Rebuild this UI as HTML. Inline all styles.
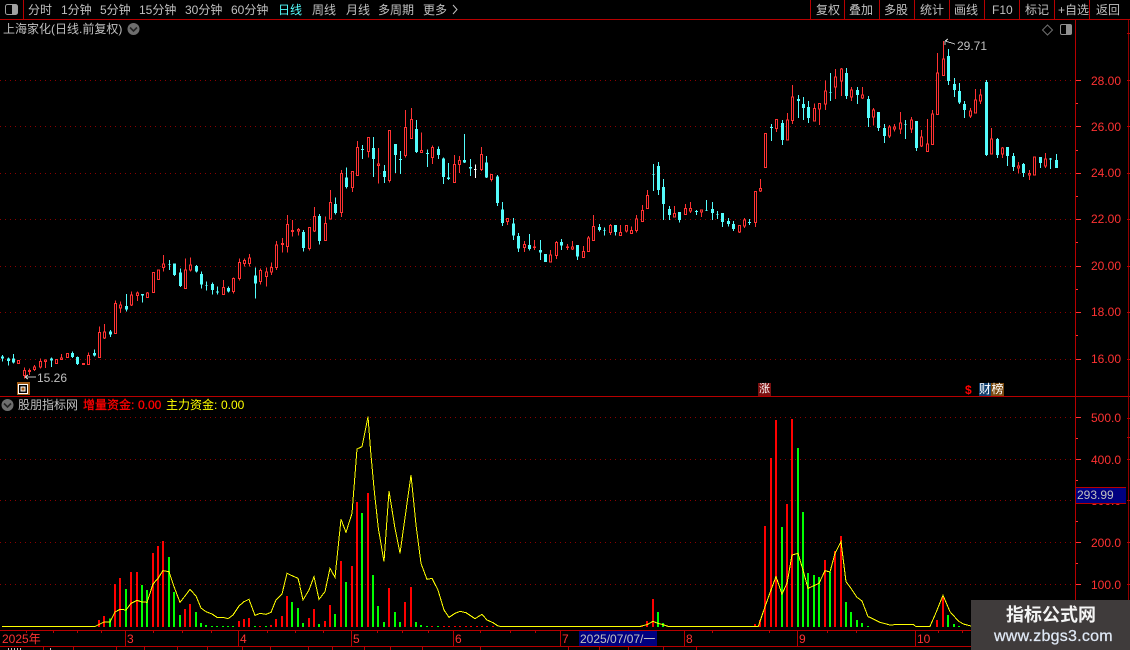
<!DOCTYPE html>
<html lang="zh">
<head>
<meta charset="utf-8">
<title>上海家化</title>
<style>
html,body{margin:0;padding:0;background:#000;width:1130px;height:650px;overflow:hidden}
#p{position:relative;width:1130px;height:650px;overflow:hidden;background:#000;font-family:"Liberation Sans","WenQuanYi Zen Hei","Noto Sans CJK SC",sans-serif;font-size:12px;line-height:14px;color:#c0c0c0}
#p svg{position:absolute;left:0;top:0}
.t{position:absolute;white-space:pre}
.a{position:absolute;white-space:pre;color:#ff3232;left:1091px}
.x{position:absolute;white-space:pre;color:#ff3232;top:632px}
.r{fill:none;stroke:#ff3232;stroke-width:3}
.rb{fill:#000;stroke:#ff3232;stroke-width:3}
.c{fill:none;stroke:#54fcfc;stroke-width:3}
.cb{fill:none;stroke:#54fcfc;stroke-width:9}
.br{fill:none;stroke:#f00;stroke-width:6}
.bg{fill:none;stroke:#0f0;stroke-width:6}
.y{fill:none;stroke:#ff0;stroke-width:3}
</style>
</head>
<body>
<div id="p">
<svg width="1130" height="650" viewBox="0 0 1130 650" shape-rendering="crispEdges">
<!-- grids -->
<path d="M0 80.5H1075M0 126.5H1075M0 173.5H1075M0 219.5H1075M0 266.5H1075M0 312.5H1075M0 359.5H1075M0 417.5H1075M0 459.5H1075M0 500.5H1075M0 542.5H1075M0 584.5H1075" fill="none" stroke="#8c0000" stroke-width="1" stroke-dasharray="1 4"/>
<!-- frame lines -->
<path d="M0 19.5H1130M0 396.5H1130M0 630.5H1075M0 646.5H1130M23.5 0V19M810.5 0V19M844.5 0V19M879.5 0V19M914.5 0V19M949.5 0V19M984.5 0V19M1019.5 0V19M1054.5 0V19M1089.5 0V19M1075.5 19V650" fill="none" stroke="#b80000" stroke-width="1"/>
<path d="M1128.5 20V650" fill="none" stroke="#900000" stroke-width="1"/>
<path d="M1127 33.5H1130M1127 80.5H1130M1127 126.5H1130M1127 173.5H1130M1127 219.5H1130M1127 266.5H1130M1127 312.5H1130M1127 359.5H1130M1127 418.5H1130M1127 437.5H1130M1127 459.5H1130M1127 500.5H1130M1127 542.5H1130M1127 584.5H1130" fill="none" stroke="#b80000" stroke-width="1"/>
<!-- axis ticks -->
<path d="M1076 80.5H1081M1076 126.5H1081M1076 173.5H1081M1076 219.5H1081M1076 266.5H1081M1076 312.5H1081M1076 359.5H1081M1076 417.5H1081M1076 459.5H1081M1076 500.5H1081M1076 542.5H1081M1076 584.5H1081M1076 103.5H1078M1076 150.5H1078M1076 196.5H1078M1076 242.5H1078M1076 289.5H1078M1076 335.5H1078M1076 438.5H1078M1076 480.5H1078M1076 521.5H1078M1076 563.5H1078M1076 605.5H1078" fill="none" stroke="#ff3232" stroke-width="1"/>
<!-- x axis ticks -->
<path d="M125.5 631V646M238.5 631V646M351.5 631V646M453.5 631V646M560.5 631V646M579.5 631V646M684.5 631V646M797.5 631V646M915.5 631V646M26.5 631V633M53.5 631V633M77.5 631V633M101.5 631V633M153.5 631V633M182.5 631V633M211.5 631V633M267.5 631V633M295.5 631V633M323.5 631V633M377.5 631V633M402.5 631V633M428.5 631V633M480.5 631V633M510.5 631V633M535.5 631V633M712.5 631V633M769.5 631V633M827.5 631V633M856.5 631V633M938.5 631V633M962.5 631V633M43.5 647V650M73.5 647V650M116.5 647V650M144.5 647V650M177.5 647V650M207.5 647V650M242.5 647V650M270.5 647V650M308.5 647V650M332.5 647V650M364.5 647V650M390.5 647V650M422.5 647V650M480.5 647V650M568.5 647V650M599.5 647V650M628.5 647V650M663.5 647V650M696.5 647V650" fill="none" stroke="#b80000" stroke-width="1"/>
<path d="M8.5 648V650M11.5 648V650M14.5 648V650M17.5 648V650M20.5 648V650M50.5 648V650" fill="none" stroke="#c0c0c0" stroke-width="1"/>

<!-- candles 1 -->
<g transform="translate(0 250) scale(.333333)">
<path class="c" d="M7.5 315V335M25.5 323V347M40.5 312V340M154.5 323V351M217.5 305V324M232.5 319V345M283.5 298V320M331.5 240V261M379.5 132V185M427.5 132V158M508.5 30V60M523.5 40V78M541.5 55V111M589.5 45V67M604.5 64V116M619.5 95V122M637.5 97V134M652.5 110V134M685.5 110V128M766.5 52V146"/>
<path class="cb" d="M7.5 320V326M25.5 325V333M40.5 326V338M154.5 326V331M217.5 309V321M232.5 321V342M283.5 309V316M331.5 245V254M379.5 168V178M427.5 132V136M508.5 43V45M523.5 40V75M541.5 68V108M589.5 48V64M604.5 72V104M619.5 106V108M637.5 102V120M652.5 125V127M685.5 114V124M766.5 76V101"/>
<path class="r" d="M73.5 352V385M88.5 355V375M103.5 345V363M121.5 325V355M136.5 328V354M184.5 312V330M265.5 307V344M298.5 229V323M313.5 222V267M346.5 151V251M361.5 155V189M394.5 124V168M412.5 124V153M442.5 126V143M490.5 15V65M556.5 25V115M571.5 22V64M670.5 90V134M700.5 82V131M718.5 25V92M733.5 25V50M748.5 12V50M781.5 55V104M799.5 52V110"/>
<path class="rb" d="M52.5 331h6V341h-6zM70.5 361h6V377h-6zM85.5 362h6V364h-6zM100.5 351h6V359h-6zM118.5 334h6V351h-6zM133.5 330h6V334h-6zM166.5 328h6V341h-6zM181.5 324h6V328h-6zM199.5 310h6V323h-6zM247.5 340h6V344h-6zM262.5 316h6V344h-6zM295.5 247h6V323h-6zM310.5 246h6V264h-6zM343.5 160h6V251h-6zM358.5 165h6V174h-6zM391.5 135h6V165h-6zM409.5 129h6V137h-6zM439.5 129h6V143h-6zM457.5 67h6V128h-6zM472.5 60h6V88h-6zM487.5 42h6V52h-6zM553.5 60h6V115h-6zM568.5 45h6V60h-6zM667.5 112h6V134h-6zM697.5 85h6V124h-6zM715.5 37h6V86h-6zM730.5 31h6V40h-6zM745.5 24h6V40h-6zM778.5 61h6V94h-6zM796.5 66h6V80h-6z"/>
</g>
<!-- candles 2 -->
<g transform="translate(270 100) scale(.333333)">
<path class="c" d="M100.5 390V455M148.5 342V434M196.5 292V344M229.5 202V266M277.5 135V177M310.5 111V231M343.5 195V249M376.5 132V219M391.5 153V222M439.5 60V159M472.5 148V201M505.5 139V177M520.5 172V252M535.5 189V240M583.5 102V189M601.5 177V228M649.5 168V234M682.5 225V318M697.5 306V378M730.5 354V420M745.5 399V456M778.5 402V452"/>
<path class="cb" d="M100.5 396V444M148.5 348V423M196.5 312V339M229.5 232V261M277.5 147V150M310.5 144V177M343.5 213V231M376.5 132V165M391.5 177V180M439.5 87V156M472.5 159V162M505.5 147V165M520.5 175V231M535.5 232V237M583.5 180V187M601.5 201V206M649.5 187V232M682.5 229V309M697.5 328V369M730.5 370V407M745.5 408V446M778.5 435V447"/>
<path d="M616.5 193V234" fill="none" stroke="#fff" stroke-width="3"/>
<path d="M612 208H619" fill="none" stroke="#fff" stroke-width="3"/>
<path class="r" d="M4.5 488V525M19.5 423V510M37.5 414V458M52.5 345V458M67.5 360V410M85.5 384V407M118.5 382V452M133.5 321V396M166.5 350V422M181.5 270V358M214.5 210V351M247.5 214V276M262.5 123V227M295.5 112V173M325.5 144V251M358.5 91V248M406.5 30V173M424.5 24V116M454.5 98V158M487.5 136V192M553.5 165V248M568.5 168V219M634.5 141V213M664.5 223V245M712.5 355V375M763.5 423V456M793.5 420V450"/>
<path class="rb" d="M1.5 502h6V516h-6zM16.5 435h6V503h-6zM34.5 431h6V434h-6zM49.5 373h6V440h-6zM64.5 391h6V395h-6zM82.5 388h6V393h-6zM115.5 382h6V446h-6zM130.5 349h6V393h-6zM163.5 370h6V422h-6zM178.5 307h6V357h-6zM211.5 220h6V338h-6zM244.5 214h6V263h-6zM259.5 142h6V227h-6zM292.5 112h6V155h-6zM322.5 192h6V197h-6zM355.5 91h6V242h-6zM403.5 82h6V167h-6zM421.5 58h6V116h-6zM451.5 151h6V158h-6zM484.5 142h6V172h-6zM550.5 193h6V248h-6zM565.5 181h6V193h-6zM631.5 163h6V208h-6zM661.5 223h6V239h-6zM709.5 355h6V365h-6zM760.5 433h6V443h-6zM790.5 441h6V443h-6z"/>
</g>
<!-- candles 3 -->
<g transform="translate(540 60) scale(.333333)">
<path class="c" d="M1.5 540V600M16.5 582V606M64.5 537V570M112.5 555V600M178.5 492V515M193.5 502V527M226.5 495V527M340.5 312V393M355.5 306V405M370.5 357V480M388.5 438V480M418.5 456V488M469.5 450V465M499.5 420V453M517.5 426V480M532.5 453V477M547.5 459V501M565.5 474V500M580.5 483V513M628.5 477V495M694.5 192V243M727.5 180V255M775.5 105V174"/>
<path class="cb" d="M1.5 570V578M16.5 582V606M64.5 546V557M112.5 555V590M178.5 501V510M193.5 510V512M226.5 495V516M340.5 343V345M355.5 318V390M370.5 381V432M388.5 447V465M418.5 456V480M469.5 453V456M499.5 451V453M517.5 447V459M532.5 462V464M547.5 459V486M565.5 483V492M580.5 492V507M628.5 486V489M694.5 201V204M727.5 189V240M775.5 117V123"/>
<path class="r" d="M31.5 570V606M49.5 543V597M82.5 552V570M97.5 543V570M130.5 558V593M145.5 528V575M160.5 465V542M211.5 492V525M241.5 495V527M259.5 496V518M274.5 499V521M289.5 465V518M307.5 435V485M322.5 390V446M403.5 438V471M436.5 432V464M451.5 426V459M484.5 450V471M598.5 496V519M613.5 474V504M646.5 394V501M661.5 357V396M709.5 178V216M742.5 159V240M757.5 75V192"/>
<path class="rb" d="M28.5 585h6V606h-6zM46.5 547h6V587h-6zM79.5 561h6V563h-6zM94.5 561h6V567h-6zM127.5 574h6V593h-6zM142.5 534h6V575h-6zM157.5 499h6V542h-6zM208.5 496h6V518h-6zM238.5 517h6V527h-6zM256.5 496h6V513h-6zM271.5 511h6V521h-6zM286.5 477h6V512h-6zM304.5 451h6V485h-6zM319.5 406h6V446h-6zM400.5 460h6V471h-6zM433.5 445h6V464h-6zM448.5 445h6V453h-6zM481.5 450h6V456h-6zM595.5 496h6V516h-6zM610.5 480h6V498h-6zM643.5 394h6V488h-6zM658.5 385h6V393h-6zM673.5 220h6V323h-6zM706.5 178h6V206h-6zM739.5 180h6V240h-6zM754.5 111h6V181h-6z"/>
</g>
<!-- candles 4 -->
<g transform="translate(800 40) scale(.333333)">
<path class="c" d="M10.5 171V240M25.5 183V249M91.5 99V183M139.5 84V177M172.5 141V192M205.5 168V261M235.5 216V273M253.5 252V309M316.5 240V297M349.5 243V333M445.5 27V135M463.5 114V171M478.5 129V192M493.5 183V234M559.5 120V348M592.5 294V354M622.5 321V378M640.5 339V393M670.5 369V411M721.5 351V384M751.5 354V387M769.5 342V384"/>
<path class="cb" d="M10.5 192V204M25.5 201V234M91.5 156V158M139.5 99V168M172.5 150V165M205.5 177V234M235.5 216V264M253.5 264V288M316.5 252V254M349.5 243V324M445.5 48V123M463.5 132V150M478.5 153V187M493.5 192V210M559.5 126V345M592.5 297V345M622.5 321V348M640.5 348V381M670.5 372V399M721.5 351V369M751.5 356V358M769.5 360V384"/>
<path class="r" d="M43.5 190V243M58.5 190V255M76.5 122V210M106.5 87V177M124.5 84V168M154.5 141V183M187.5 141V177M220.5 204V256M268.5 255V294M283.5 252V275M301.5 216V282M334.5 231V279M364.5 270V321M382.5 237V335M397.5 210V314M412.5 39V224M430.5 3V107M511.5 204V234M526.5 147V219M541.5 147V192M574.5 264V342M607.5 321V354M655.5 366V400M688.5 390V420M736.5 339V384"/>
<path class="rb" d="M40.5 205h6V243h-6zM55.5 190h6V207h-6zM73.5 153h6V192h-6zM103.5 111h6V141h-6zM121.5 87h6V123h-6zM151.5 150h6V171h-6zM184.5 165h6V174h-6zM217.5 210h6V231h-6zM265.5 261h6V288h-6zM280.5 261h6V267h-6zM298.5 249h6V267h-6zM331.5 240h6V267h-6zM361.5 291h6V318h-6zM379.5 312h6V335h-6zM394.5 222h6V314h-6zM409.5 99h6V224h-6zM427.5 57h6V107h-6zM508.5 213h6V228h-6zM523.5 180h6V219h-6zM538.5 165h6V183h-6zM571.5 297h6V342h-6zM604.5 324h6V342h-6zM652.5 378h6V384h-6zM685.5 400h6V405h-6zM700.5 351h6V405h-6zM733.5 357h6V378h-6z"/>
</g>

<!-- bars and line -->
<g transform="translate(0 520) scale(.333333)">
<path class="br" d="M297 321V300M312 321V288M345 321V192M360 321V174M393 321V156M411 321V156M459 321V99M474 321V78M489 321V63M555 321V267M570 321V252M717 321V303M732 321V297M747 321V294M780 321V318M813 321V315M828 321V297M846 321V288M861 321V228"/>
<path class="bg" d="M330 321V295M378 321V207M426 321V195M441 321V210M507 321V111M522 321V216M540 321V285M588 321V276M603 321V309M618 321V315M636 321V318M651 321V318M669 321V318M684 321V318M699 321V318M765 321V318M798 321V318M876 321V246M894 321V264"/>
<path class="y" d="M6 320L284 320L300 312L312 306L330 306L345 276L360 268L378 270L393 250L411 241L426 246L441 247L459 192L474 175L489 152L507 155L522 200L540 247L555 228L570 208L588 228L603 264L618 275L636 282L651 292L669 292L684 296L699 285L717 258L732 245L747 238L765 286L780 280L798 283L813 277L828 240L846 222L861 160L876 167L894 175L900 198"/>
</g>
<g transform="translate(300 400) scale(.333333)">
<path class="br" d="M27 681V654M42 681V627M75 681V663M90 681V615M123 681V483M156 681V498M171 681V306M204 681V279M267 681V564M315 681V606M333 681V561M396 681V678M432 681V678M447 681V678M465 681V678M480 681V678M498 681V678M513 681V678M531 681V678M546 681V678M561 681V678M579 681V678"/>
<path class="bg" d="M9 681V669M57 681V672M105 681V642M138 681V546M186 681V339M219 681V525M234 681V618M252 681V666M285 681V636M300 681V666M348 681V666M363 681V675M381 681V678M414 681V678"/>
<path class="y" d="M0 560L9 600L27 570L42 530L57 598L75 575L90 505L105 532L123 358L138 397L156 340L171 147L186 140L204 50L212 155L222 265L235 385L252 485L267 273L285 385L300 460L333 225L348 375L363 490L381 538L396 535L414 570L432 630L447 652L465 640L480 634L498 638L525 656L546 643L561 660L579 668L594 678L600 679"/>
</g>
<path d="M500 626.5H642" fill="none" stroke="#ff0" stroke-width="1"/>
<g transform="translate(540 590) scale(.333333)">
<path class="br" d="M306 111V106M321 111V93M339 111V27"/>
<path class="bg" d="M354 111V66M369 111V99"/>
<path class="y" d="M300 109L321 104L339 94L354 100L369 104L384 109L600 109"/>
</g>
<g transform="translate(740 400) scale(.333333)">
<path class="br" d="M45 681V672M60 681V660M75 681V378M93 681V174M108 681V60M141 681V312M156 681V57M255 681V480M285 681V453M303 681V408"/>
<path class="bg" d="M126 681V381M174 681V144M189 681V336M204 681V519M222 681V525M237 681V531M270 681V516M318 681V606M333 681V636M351 681V660M366 681V669M384 681V678"/>
<path class="y" d="M0 679L55 679L75 620L93 570L108 530L126 582L141 550L156 465L174 460L189 510L204 565L237 550L255 512L270 516L285 460L303 425L318 545L333 565L351 592L366 603L384 650L390 652"/>
</g>
<g transform="translate(900 370) scale(.333333)">
<path class="br" d="M111 771V750M129 771V678"/>
<path class="bg" d="M144 771V735M162 771V762M177 771V768"/>
<path class="y" d="M-90 742L-60 757L-30 765L0 763L40 763L47 769L90 769L105 735L129 676L150 725L175 753L190 762L213 768"/>
</g>

<!-- icons -->
<g shape-rendering="geometricPrecision">
<rect x="5.5" y="4.5" width="12" height="10" rx="2" fill="#000" stroke="#a0a0a0"/>
<rect x="12" y="5" width="5" height="9" fill="#a0a0a0"/>
<rect x="1060.5" y="24.5" width="11" height="10" rx="1.5" fill="#000" stroke="#909090"/>
<rect x="1066" y="25" width="5" height="9" fill="#909090"/>
<path d="M1047.5 25L1052.5 30L1047.5 35L1042.5 30Z" fill="none" stroke="#707070"/>
<circle cx="133.5" cy="29" r="6" fill="#6e6e6e"/>
<path d="M130 27.5L133.5 31L137 27.5" fill="none" stroke="#222" stroke-width="1.6"/>
<circle cx="7.5" cy="405" r="6" fill="#6e6e6e"/>
<path d="M4 403.5L7.5 407L11 403.5" fill="none" stroke="#222" stroke-width="1.6"/>
<path d="M453 5L457 9.5L453 14" fill="none" stroke="#c0c0c0"/>
</g>
<!-- price flags -->
<path d="M945 41H947M945 41V45M945 41L948 39M945 41L955 44" fill="none" stroke="#c0c0c0" stroke-width="1"/>
<path d="M25 377H36M25 377L28 375M25 377L28 379" fill="none" stroke="#c0c0c0" stroke-width="1"/>
<!-- replay icon -->
<rect x="17" y="382" width="13" height="13" fill="#a05a14"/>
<rect x="18.5" y="384.5" width="9" height="9" fill="#000" stroke="#fff"/>
<rect x="21" y="387" width="4" height="4" fill="#a05a14" stroke="#fff"/>
<!-- overlays -->
<rect x="579" y="631" width="78" height="15" fill="#000080"/>
</svg>

<div class="t" style="left:28px;top:3px">分时</div>
<div class="t" style="left:61px;top:3px">1分钟</div>
<div class="t" style="left:100px;top:3px">5分钟</div>
<div class="t" style="left:139px;top:3px">15分钟</div>
<div class="t" style="left:185px;top:3px">30分钟</div>
<div class="t" style="left:231px;top:3px">60分钟</div>
<div class="t" style="left:278px;top:3px;color:#54fcfc">日线</div>
<div class="t" style="left:312px;top:3px">周线</div>
<div class="t" style="left:346px;top:3px">月线</div>
<div class="t" style="left:378px;top:3px">多周期</div>
<div class="t" style="left:423px;top:3px">更多</div>
<div class="t" style="left:816px;top:3px">复权</div>
<div class="t" style="left:849px;top:3px">叠加</div>
<div class="t" style="left:884px;top:3px">多股</div>
<div class="t" style="left:920px;top:3px">统计</div>
<div class="t" style="left:954px;top:3px">画线</div>
<div class="t" style="left:992px;top:3px">F10</div>
<div class="t" style="left:1025px;top:3px">标记</div>
<div class="t" style="left:1058px;top:3px">+自选</div>
<div class="t" style="left:1096px;top:3px">返回</div>

<div class="t" style="left:3px;top:22px">上海家化(日线.前复权)</div>
<div class="t" style="left:957px;top:39px">29.71</div>
<div class="t" style="left:37px;top:371px">15.26</div>

<div class="a" style="top:74px">28.00</div>
<div class="a" style="top:120px">26.00</div>
<div class="a" style="top:166px">24.00</div>
<div class="a" style="top:212px">22.00</div>
<div class="a" style="top:259px">20.00</div>
<div class="a" style="top:305px">18.00</div>
<div class="a" style="top:352px">16.00</div>
<div class="a" style="top:411px">500.0</div>
<div class="a" style="top:453px">400.0</div>
<div class="a" style="top:494px">300.0</div>
<div class="a" style="top:536px">200.0</div>
<div class="a" style="top:578px">100.0</div>

<div style="position:absolute;left:1076px;top:487px;width:50px;height:15px;background:#000080;border-top:1px solid #b80000;border-bottom:1px solid #b80000"></div>
<div class="t" style="left:1077px;top:488px">293.99</div>

<div class="t" style="left:18px;top:398px">股朋指标网</div>
<div class="t" style="left:83px;top:398px;color:#f00;-webkit-text-stroke:.3px #f00">增量资金:</div>
<div class="t" style="left:138px;top:398px;color:#f00;-webkit-text-stroke:.3px #f00">0.00</div>
<div class="t" style="left:166px;top:398px;color:#ff0">主力资金:</div>
<div class="t" style="left:221px;top:398px;color:#ff0">0.00</div>

<div class="t" style="left:758px;top:383px;width:13px;height:13px;background:#7a1010;color:#fff;font-size:11px;line-height:13px;text-align:center">涨</div>
<div class="t" style="left:965px;top:383px;color:#f00;font-weight:bold">$</div>
<div class="t" style="left:979px;top:383px;width:12px;height:13px;background:#12406e;color:#fff;line-height:13px;text-align:center">财</div>
<div class="t" style="left:991px;top:383px;width:13px;height:13px;background:#7a4a10;color:#fff;line-height:13px;text-align:center">榜</div>

<div class="x" style="left:2px">2025年</div>
<div class="x" style="left:127px">3</div>
<div class="x" style="left:240px">4</div>
<div class="x" style="left:353px">5</div>
<div class="x" style="left:455px">6</div>
<div class="x" style="left:562px">7</div>
<div class="x" style="left:686px">8</div>
<div class="x" style="left:799px">9</div>
<div class="x" style="left:917px">10</div>
<div class="t" style="left:580px;top:632px">2025/07/07/一</div>

<div style="position:absolute;left:971px;top:600px;width:159px;height:50px;background:#3f3b3b"></div>
<div class="t" style="left:1006px;top:605px;font-size:18px;line-height:20px;font-weight:bold;color:#f4f4f4">指标公式网</div>
<div class="t" style="left:994px;top:627px;font-size:16px;line-height:19px;letter-spacing:.25px;color:#dfe8f5;-webkit-text-stroke:.25px #dfe8f5">www.zbgs3.com</div>
</div>
</body>
</html>
